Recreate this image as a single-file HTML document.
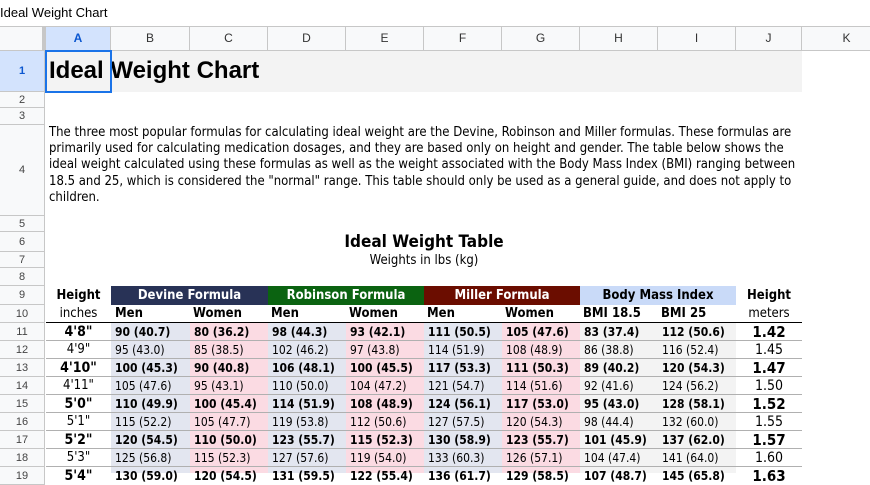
<!DOCTYPE html>
<html><head><meta charset="utf-8"><style>
*{margin:0;padding:0;box-sizing:border-box}
body{width:870px;height:473px;overflow:hidden;background:#fff;font-family:"DejaVu Sans Condensed","DejaVu Sans",sans-serif;position:relative}
.a{position:absolute}
.top{left:0;top:0;width:870px;height:27px;border-bottom:1px solid #c7c7c7;font:13px "Liberation Sans",sans-serif;line-height:26px;padding-left:0;color:#000}
.ch{top:27px;height:24px;border-right:1px solid #c7c7c7;border-bottom:1px solid #c7c7c7;background:#f8f9fa;font:12px "Liberation Sans",sans-serif;color:#333;text-align:center;line-height:23px}
.rh{left:0;width:45px;border-right:1px solid #c7c7c7;border-bottom:1px solid #c7c7c7;background:#f8f9fa;font:11px "Liberation Sans",sans-serif;color:#444;text-align:center;display:flex;align-items:center;justify-content:center}
.c{font-size:12px;line-height:18px;white-space:nowrap;padding-left:4px}
.b{font-weight:bold}
</style></head><body>
<div class="a top">Ideal Weight Chart</div>
<div class="a ch" style="left:0;width:46px;background:#f8f9fa;border-right:4px solid #c7c7c7"></div>
<div class="a ch" style="left:46px;width:65px;background:#d3e3fd;font-weight:bold;color:#0b57d0">A</div>
<div class="a ch" style="left:111px;width:79px">B</div>
<div class="a ch" style="left:190px;width:78px">C</div>
<div class="a ch" style="left:268px;width:78px">D</div>
<div class="a ch" style="left:346px;width:78px">E</div>
<div class="a ch" style="left:424px;width:78px">F</div>
<div class="a ch" style="left:502px;width:78px">G</div>
<div class="a ch" style="left:580px;width:78px">H</div>
<div class="a ch" style="left:658px;width:78px">I</div>
<div class="a ch" style="left:736px;width:66px">J</div>
<div class="a ch" style="left:802px;width:90px">K</div>
<div class="a rh" style="top:51px;height:41px;background:#d3e3fd;font-weight:bold;color:#0b57d0">1</div>
<div class="a rh" style="top:92px;height:16px">2</div>
<div class="a rh" style="top:108px;height:17px">3</div>
<div class="a rh" style="top:125px;height:91px">4</div>
<div class="a rh" style="top:216px;height:16px">5</div>
<div class="a rh" style="top:232px;height:20px">6</div>
<div class="a rh" style="top:252px;height:16px">7</div>
<div class="a rh" style="top:268px;height:18px">8</div>
<div class="a rh" style="top:286px;height:19px">9</div>
<div class="a rh" style="top:305px;height:18px">10</div>
<div class="a rh" style="top:323px;height:18px">11</div>
<div class="a rh" style="top:341px;height:18px">12</div>
<div class="a rh" style="top:359px;height:18px">13</div>
<div class="a rh" style="top:377px;height:18px">14</div>
<div class="a rh" style="top:395px;height:18px">15</div>
<div class="a rh" style="top:413px;height:18px">16</div>
<div class="a rh" style="top:431px;height:18px">17</div>
<div class="a rh" style="top:449px;height:18px">18</div>
<div class="a rh" style="top:467px;height:18px">19</div>
<div class="a" style="left:46px;top:51px;width:756px;height:41px;background:#f3f3f3"></div>
<div class="a" style="left:49px;top:57px;font:bold 24px 'Liberation Sans',sans-serif;color:#000">Ideal Weight Chart</div>
<div class="a" style="left:45px;top:50px;width:67px;height:43px;border:2px solid #1a73e8"></div>
<div class="a" style="left:49px;top:125px;width:755px;font-size:13px;line-height:16.2px;color:#000">The three most popular formulas for calculating ideal weight are the Devine, Robinson and Miller formulas. These formulas are primarily used for calculating medication dosages, and they are based only on height and gender. The table below shows the ideal weight calculated using these formulas as well as the weight associated with the Body Mass Index (BMI) ranging between 18.5 and 25, which is considered the "normal" range. This table should only be used as a general guide, and does not apply to children.</div>
<div class="a" style="left:46px;top:232px;width:756px;text-align:center;font-weight:bold;font-size:17px;line-height:20px">Ideal Weight Table</div>
<div class="a" style="left:46px;top:252px;width:756px;text-align:center;font-size:13px;line-height:18px">Weights in lbs (kg)</div>
<div class="a" style="left:111px;top:286px;width:157px;height:19px;background:#283256;color:#fff;font-weight:bold;font-size:13px;text-align:center;line-height:20px">Devine Formula</div>
<div class="a" style="left:268px;top:286px;width:156px;height:19px;background:#0b6311;color:#fff;font-weight:bold;font-size:13px;text-align:center;line-height:20px">Robinson Formula</div>
<div class="a" style="left:424px;top:286px;width:156px;height:19px;background:#6b0d00;color:#fff;font-weight:bold;font-size:13px;text-align:center;line-height:20px">Miller Formula</div>
<div class="a" style="left:580px;top:286px;width:156px;height:19px;background:#c9daf8;color:#000;font-weight:bold;font-size:13px;text-align:center;line-height:20px">Body Mass Index</div>
<div class="a b" style="left:46px;top:286px;width:65px;text-align:center;font-size:13px;line-height:20px">Height</div>
<div class="a b" style="left:736px;top:286px;width:66px;text-align:center;font-size:13px;line-height:20px">Height</div>
<div class="a" style="left:46px;top:305px;width:65px;text-align:center;font-size:13px;line-height:18px">inches</div>
<div class="a" style="left:736px;top:305px;width:66px;text-align:center;font-size:13px;line-height:18px">meters</div>
<div class="a b" style="left:111px;top:305px;font-size:13px;line-height:18px;padding-left:4px">Men</div>
<div class="a b" style="left:190px;top:305px;font-size:13px;line-height:18px;padding-left:3px">Women</div>
<div class="a b" style="left:268px;top:305px;font-size:13px;line-height:18px;padding-left:3px">Men</div>
<div class="a b" style="left:346px;top:305px;font-size:13px;line-height:18px;padding-left:3px">Women</div>
<div class="a b" style="left:424px;top:305px;font-size:13px;line-height:18px;padding-left:3px">Men</div>
<div class="a b" style="left:502px;top:305px;font-size:13px;line-height:18px;padding-left:3px">Women</div>
<div class="a b" style="left:580px;top:305px;font-size:13px;line-height:18px;padding-left:3px">BMI 18.5</div>
<div class="a b" style="left:658px;top:305px;font-size:13px;line-height:18px;padding-left:3px">BMI 25</div>
<div class="a" style="left:46px;top:322px;width:756px;height:1px;background:#000"></div>
<div class="a" style="left:111px;top:323px;width:79px;height:150px;background:#e3e6f0"></div>
<div class="a" style="left:190px;top:323px;width:78px;height:150px;background:#fbdbe3"></div>
<div class="a" style="left:268px;top:323px;width:78px;height:150px;background:#e3e6f0"></div>
<div class="a" style="left:346px;top:323px;width:78px;height:150px;background:#fbdbe3"></div>
<div class="a" style="left:424px;top:323px;width:78px;height:150px;background:#e3e6f0"></div>
<div class="a" style="left:502px;top:323px;width:78px;height:150px;background:#fbdbe3"></div>
<div class="a" style="left:580px;top:323px;width:156px;height:150px;background:#f3f3f3"></div>
<div class="a" style="left:46px;top:323px;width:756px;height:150px;background:repeating-linear-gradient(transparent 0 17px,#b0b0b0 17px 18px)"></div>
<div id="rows"></div>
<script>
var d=[["4'8\"","90 (40.7)","80 (36.2)","98 (44.3)","93 (42.1)","111 (50.5)","105 (47.6)","83 (37.4)","112 (50.6)","1.42"],
["4'9\"","95 (43.0)","85 (38.5)","102 (46.2)","97 (43.8)","114 (51.9)","108 (48.9)","86 (38.8)","116 (52.4)","1.45"],
["4'10\"","100 (45.3)","90 (40.8)","106 (48.1)","100 (45.5)","117 (53.3)","111 (50.3)","89 (40.2)","120 (54.3)","1.47"],
["4'11\"","105 (47.6)","95 (43.1)","110 (50.0)","104 (47.2)","121 (54.7)","114 (51.6)","92 (41.6)","124 (56.2)","1.50"],
["5'0\"","110 (49.9)","100 (45.4)","114 (51.9)","108 (48.9)","124 (56.1)","117 (53.0)","95 (43.0)","128 (58.1)","1.52"],
["5'1\"","115 (52.2)","105 (47.7)","119 (53.8)","112 (50.6)","127 (57.5)","120 (54.3)","98 (44.4)","132 (60.0)","1.55"],
["5'2\"","120 (54.5)","110 (50.0)","123 (55.7)","115 (52.3)","130 (58.9)","123 (55.7)","101 (45.9)","137 (62.0)","1.57"],
["5'3\"","125 (56.8)","115 (52.3)","127 (57.6)","119 (54.0)","133 (60.3)","126 (57.1)","104 (47.4)","141 (64.0)","1.60"],
["5'4\"","130 (59.0)","120 (54.5)","131 (59.5)","122 (55.4)","136 (61.7)","129 (58.5)","107 (48.7)","145 (65.8)","1.63"]];
var xs=[111,190,268,346,424,502,580,658],h='';
d.forEach(function(r,i){var y=323+i*18,b=i%2==0;
h+='<div class="a" style="left:46px;top:'+y+'px;width:65px;text-align:center;line-height:18px;font-size:'+(b?'14px;font-weight:bold':'13px')+'">'+r[0]+'</div>';
for(var j=0;j<8;j++)h+='<div class="a c'+(b?' b':'')+'" style="left:'+xs[j]+'px;top:'+y+'px">'+r[j+1]+'</div>';
h+='<div class="a" style="left:736px;top:'+y+'px;width:66px;text-align:center;line-height:18px;font-size:'+(b?'15px;font-weight:bold':'14px')+'">'+r[9]+'</div>';});
document.getElementById('rows').innerHTML=h;
</script>
</body></html>
